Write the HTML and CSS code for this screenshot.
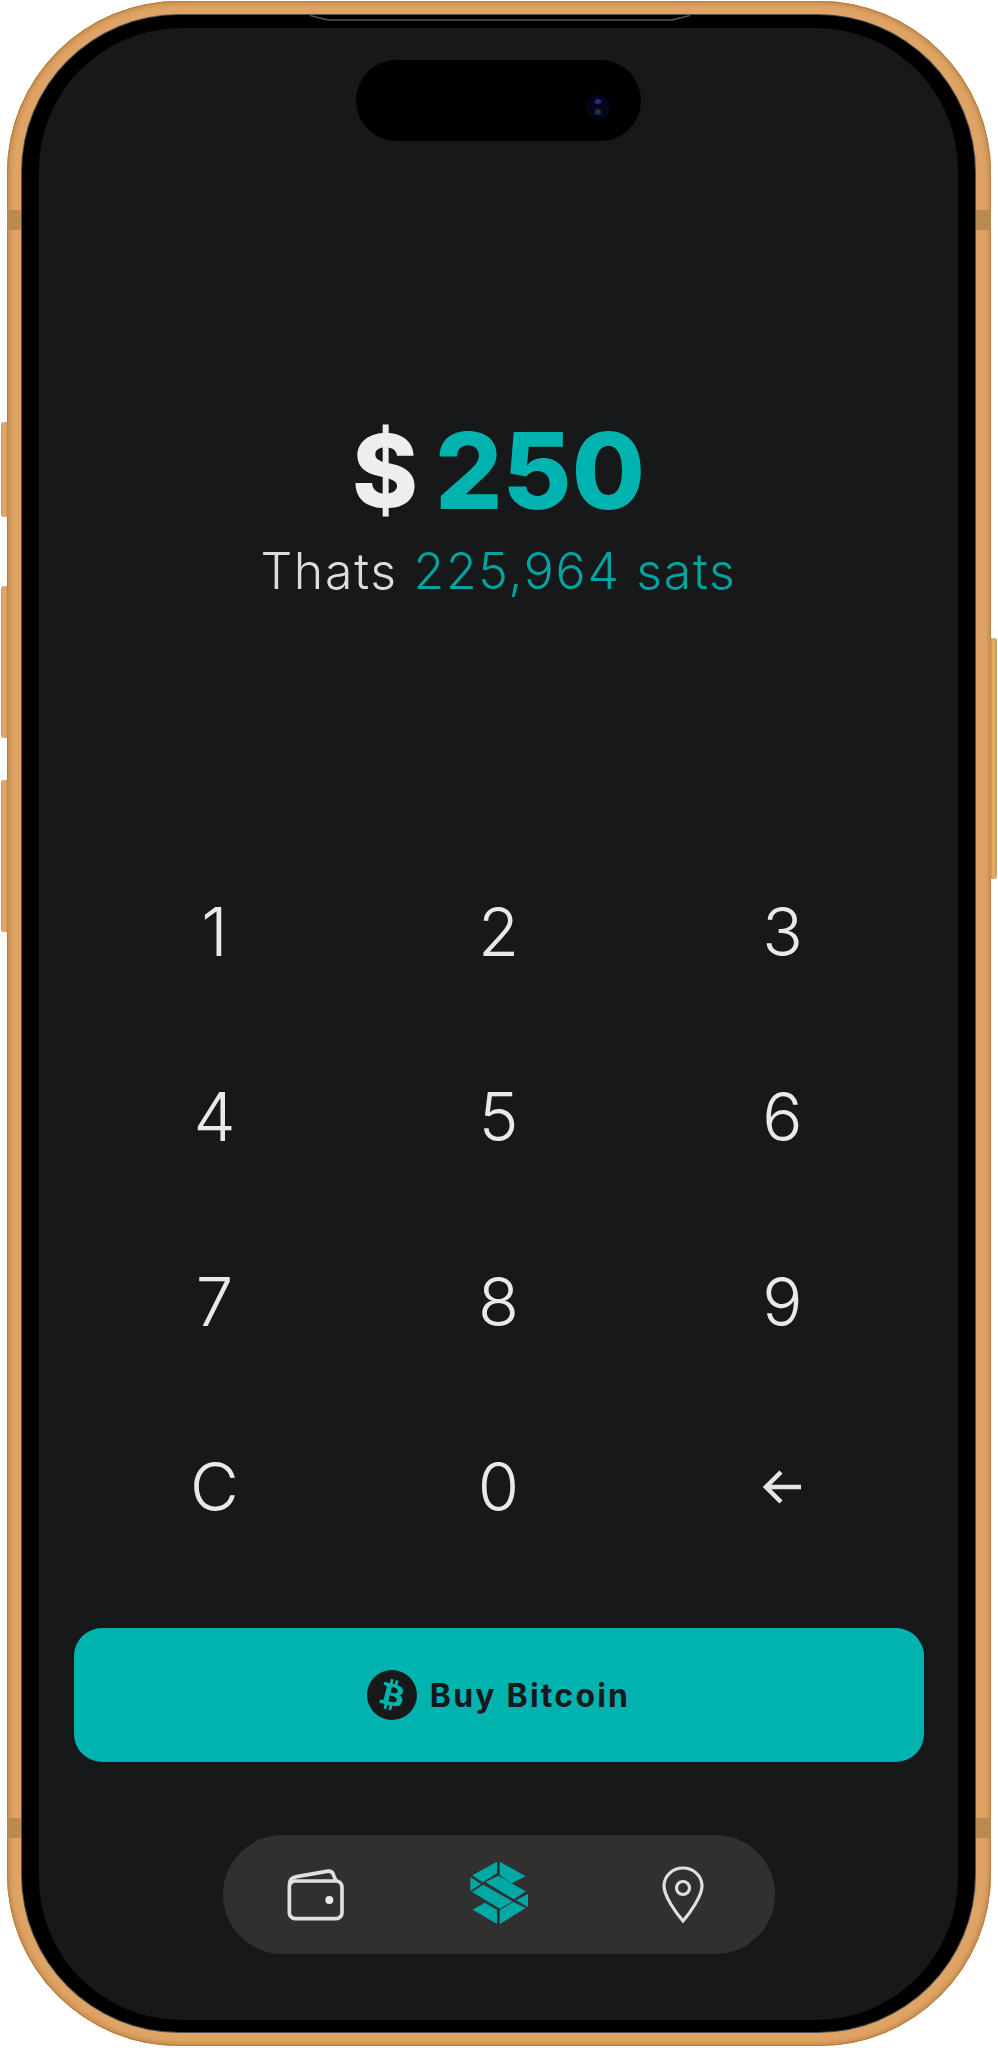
FILE: index.html
```html
<!DOCTYPE html>
<html lang="en">
<head>
  <meta charset="UTF-8">
  <title>Buy Bitcoin</title>
  <link rel="stylesheet" href="styles.css">
</head>
<body>

  <div class="frame">
    <!-- Side buttons and antenna bands -->
    <span class="side-btn btn-mute"></span>
    <span class="side-btn btn-up"></span>
    <span class="side-btn btn-down"></span>
    <span class="side-btn btn-power"></span>
    <span class="band band-tl"></span>
    <span class="band band-tr"></span>
    <span class="band band-bl"></span>
    <span class="band band-br"></span>

    <div class="bezel">
      <svg class="speaker" width="380" height="7" viewBox="0 0 380 7"><path d="M0 .5L18 5H362L380 .5" fill="none" stroke="#55585a" stroke-width="1.500"/></svg>

      <div class="screen">
        <div class="island">
          <svg class="camera" width="28" height="28" viewBox="0 0 28 28">
            <circle cx="14" cy="14" r="12.500" fill="#04041a"/>
            <ellipse cx="14" cy="8.500" rx="3.500" ry="2.500" fill="#2a2a78"/>
            <ellipse cx="14" cy="19" rx="3" ry="3" fill="#123a3a"/>
          </svg>
        </div>

        <div class="amount"><span class="currency">$</span><span class="value">250</span></div>
        <div class="sats">Thats <span class="sats-value">225,964 sats</span></div>

        <div class="keypad">
          <div class="key">1</div>
          <div class="key">2</div>
          <div class="key">3</div>
          <div class="key">4</div>
          <div class="key">5</div>
          <div class="key">6</div>
          <div class="key">7</div>
          <div class="key">8</div>
          <div class="key">9</div>
          <div class="key">C</div>
          <div class="key">0</div>
          <div class="key">
            <svg width="40" height="36" viewBox="0 0 40 36"><path d="M38 18H4M18 3L3 18L18 33" fill="none" stroke="#e4e5e7" stroke-width="4.500"/></svg>
          </div>
        </div>

        <div class="buy">
          <svg class="buy-icon" width="50" height="50" viewBox="0 0 24 24"><path fill="#16181a" d="M23.638 14.904c-1.602 6.43-8.113 10.34-14.542 8.736C2.67 22.05-1.244 15.525.362 9.105 1.962 2.67 8.475-1.243 14.9.358c6.43 1.605 10.342 8.115 8.738 14.548v-.002zm-6.35-4.613c.24-1.59-.974-2.45-2.64-3.03l.54-2.153-1.315-.33-.525 2.107c-.345-.087-.705-.167-1.064-.25l.526-2.127-1.32-.33-.54 2.165c-.285-.067-.565-.132-.84-.2l-1.815-.45-.35 1.407s.975.225.955.236c.535.136.63.486.615.766l-1.477 5.92c-.075.166-.24.406-.614.314.015.02-.96-.24-.96-.24l-.66 1.51 1.71.426.93.242-.54 2.19 1.32.327.54-2.17c.36.1.705.19 1.05.273l-.51 2.154 1.32.33.545-2.19c2.24.427 3.93.257 4.64-1.774.57-1.637-.03-2.58-1.217-3.196.854-.193 1.5-.76 1.68-1.93h.01zm-3.01 4.22c-.404 1.64-3.157.75-4.05.53l.72-2.9c.896.23 3.757.67 3.33 2.37zm.41-4.24c-.37 1.49-2.662.735-3.405.55l.654-2.64c.744.18 3.137.524 2.75 2.084v.006z"/></svg>
          <span>Buy Bitcoin</span>
        </div>

        <nav class="nav">
          <div class="nav-item">
            <svg width="78" height="74" viewBox="0 -24 234 222" fill="none" stroke="#e0e0e0" stroke-width="11">
              <rect x="40" y="45" width="158" height="113" rx="18"/>
              <path d="M40 58C40 42 48 34 62 32L152 16C164 14 170 18 173 28L180 45"/>
              <circle cx="160" cy="102" r="12" fill="#e8e8e8" stroke="none"/>
            </svg>
          </div>
          <div class="nav-item">
            <svg width="78" height="84" viewBox="0 -15 234 252" fill="#00a8a5">
              <polygon points="111,11 111,46 68,73 37,52"/>
              <polygon points="119,11 197,55 155,76 119,51"/>
              <polygon points="31,58 63,78 31,99"/>
              <polygon points="76,72 115,53 197,100 162,124"/>
              <polygon points="36,102 70,80 157,130 120,152"/>
              <polygon points="204,108 204,147 168,127"/>
              <polygon points="38,155 75,134 111,156 111,198"/>
              <polygon points="119,156 160,132 197,150 119,199"/>
            </svg>
          </div>
          <div class="nav-item">
            <svg width="44" height="58" viewBox="0 0 44 58" fill="none" stroke="#e0e0e0" stroke-width="3.200">
              <path d="M22 2C12 2 3 9.500 3 20C3 30 15 47 22 55C29 47 41 30 41 20C41 9.500 32 2 22 2Z"/>
              <circle cx="22" cy="22" r="6.500"/>
            </svg>
          </div>
        </nav>
      </div>
    </div>
  </div>

</body>
</html>
```

FILE: styles.css
```css
body {
  margin: 0;
  padding: 1px 7px 2px;
  background: #fff;
  font-family: Inter, "Liberation Sans", sans-serif;
}

.frame {
  position: relative;
  width: 984px;
  height: 2045px;
  box-sizing: border-box;
  padding: 14px 16px 14px 15px;
  border-radius: 172px;
  background: #dfa365;
  box-shadow: inset 0 0 0 1px #b5803f, inset 0 0 4px 3px #c48c4e;
}

.side-btn {
  position: absolute;
  left: -6px;
  width: 7px;
  border-radius: 3px 0 0 3px;
  background: linear-gradient(to right, #d39a5c, #e6ac70 60%, #b98548);
}
.btn-mute { top: 421px; height: 95px; }
.btn-up { top: 585px; height: 152px; }
.btn-down { top: 779px; height: 152px; }
.btn-power {
  left: auto;
  right: -6px;
  top: 637px;
  height: 241px;
  border-radius: 0 3px 3px 0;
  background: linear-gradient(to left, #d39a5c, #e6ac70 60%, #b98548);
}

.band {
  position: absolute;
  width: 15px;
  height: 20px;
  background: #ba8a50;
}
.band-tl { left: 0; top: 209px; }
.band-tr { right: 0; top: 209px; }
.band-bl { left: 0; top: 1817px; }
.band-br { right: 0; top: 1817px; }

.bezel {
  position: relative;
  height: 100%;
  box-sizing: border-box;
  padding: 13px 17px 12px 17px;
  border-radius: 157px;
  background: #000;
  box-shadow: 0 0 0 1px #4c5458;
}

.speaker {
  position: absolute;
  left: 288px;
  top: 0;
}

.screen {
  display: flex;
  flex-direction: column;
  align-items: center;
  height: 100%;
  border-radius: 142px;
  background: #17181a;
}

.island {
  display: flex;
  align-items: center;
  justify-content: flex-end;
  box-sizing: border-box;
  width: 285px;
  height: 81px;
  margin-top: 32px;
  padding: 0 29px 0 0;
  border-radius: 41px;
  background: #000;
}
.camera {
  margin-top: 12px;
}

.amount {
  display: flex;
  align-items: center;
  gap: 17px;
  height: 100px;
  margin-top: 280px;
  font-size: 106px;
  font-weight: 800;
  line-height: 100px;
}
.currency {
  color: #eceef0;
  font-size: 100px;
}
.value { color: #00b3af; }

.sats {
  margin-top: 20px;
  color: #dcdcdc;
  font-size: 50px;
  font-weight: 300;
  line-height: 60px;
  letter-spacing: 1.7px;
}
.sats-value { color: #00a3a0; }

.keypad {
  display: grid;
  grid-template-columns: repeat(3, 284px);
  grid-auto-rows: 185px;
  margin-top: 238px;
}
.key {
  display: flex;
  align-items: center;
  justify-content: center;
  color: #e8e9eb;
  font-size: 67px;
  font-weight: 350;
}

.buy {
  display: flex;
  align-items: center;
  justify-content: center;
  gap: 13px;
  flex-shrink: 0;
  width: 850px;
  height: 134px;
  margin-top: 49px;
  border-radius: 28px;
  background: #00b3af;
  color: #16181a;
  font-size: 32px;
  font-weight: 700;
  letter-spacing: 2.2px;
}

.nav {
  display: grid;
  grid-template-columns: repeat(3, 184px);
  flex-shrink: 0;
  height: 119px;
  margin-top: 73px;
  border-radius: 60px;
  background: #303030;
}
.nav-item {
  display: flex;
  align-items: center;
  justify-content: center;
}
```
